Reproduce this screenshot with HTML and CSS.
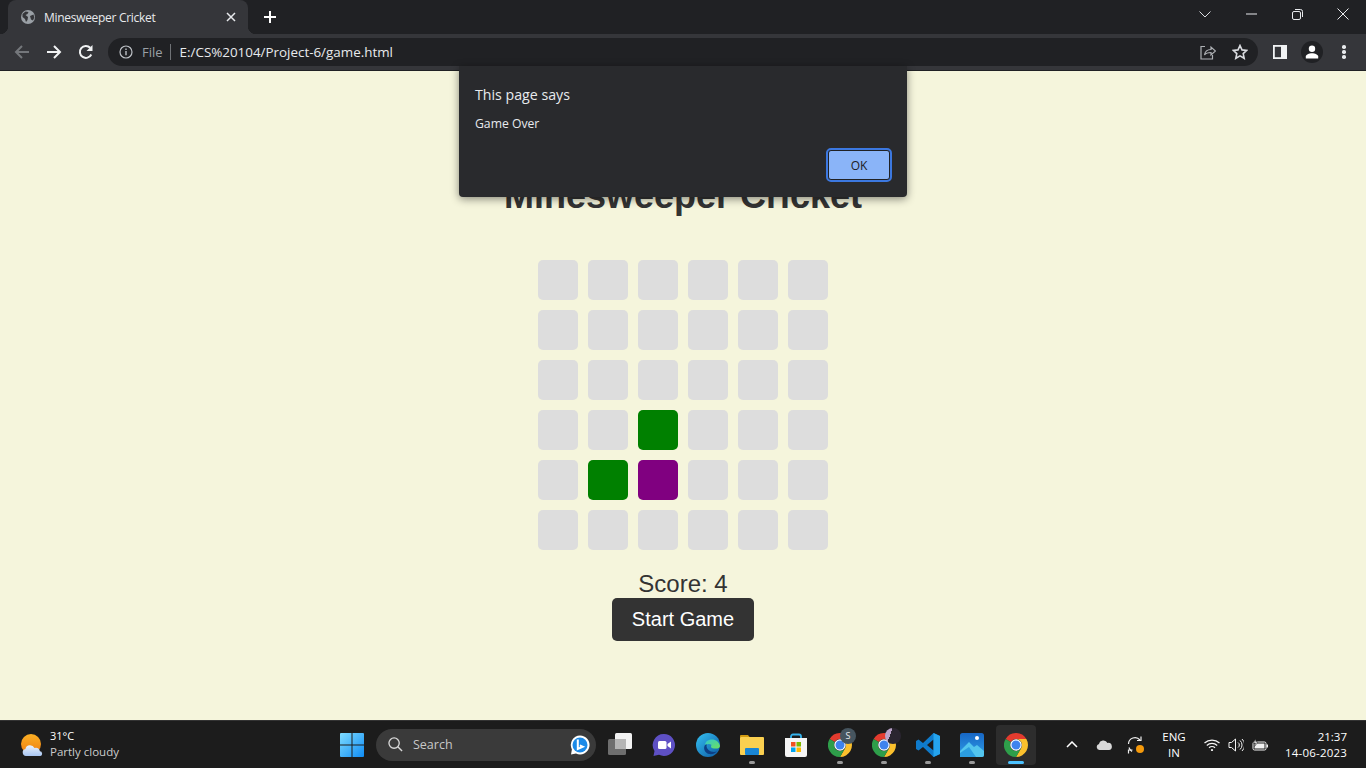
FILE: index.html
```html
<!DOCTYPE html>
<html lang="en">
<head>
    <meta charset="UTF-8">
    <title>Minesweeper Cricket</title>
    <link rel="stylesheet" href="styles.css">
</head>
<body>
<svg class="defs" width="0" height="0">
    <symbol id="chrome" viewBox="0 0 48 48">
        <path fill="#e33b2e" d="M3.2 12A24 24 0 0 1 44.78 12H24A12 12 0 0 0 13.6 18z"/>
        <path fill="#fbc02d" d="M44.78 12A24 24 0 0 1 24 48L34.4 30A12 12 0 0 0 24 12z"/>
        <path fill="#2e9e4a" d="M24 48A24 24 0 0 1 3.2 12L13.6 18A12 12 0 0 0 34.4 30z"/>
        <circle cx="24" cy="24" r="11.5" fill="#fff"/>
        <circle cx="24" cy="24" r="9" fill="#3f83ee"/>
    </symbol>
</svg>

<div class="tabstrip">
    <div class="tab">
        <svg class="favicon" viewBox="0 0 16 16"><circle cx="8" cy="8" r="7" fill="#9aa0a6"/><path fill="#35363a" d="M2.500 5l3-2.500 3 .5-1 2-2 1 2.500 2-.5 3-1.500 2-1-3-2.500-2zM10 7l3.500-1.500.8 3-1.300 3-2-1z"/></svg>
        <span class="tab-title">Minesweeper Cricket</span>
        <svg class="tab-close" viewBox="0 0 10 10"><path d="M1 1l8 8M9 1l-8 8" stroke="#e8eaed" stroke-width="1.500"/></svg>
    </div>
    <svg class="new-tab" viewBox="0 0 12 12"><path d="M6 0v12M0 6h12" stroke="#fff" stroke-width="2"/></svg>
    <div class="win-controls">
        <span class="win-btn"><svg width="12" height="7" viewBox="0 0 12 7"><path d="M.5.5L6 6 11.500.5" fill="none" stroke="#dadce0"/></svg></span>
        <span class="win-btn"><svg width="11" height="2" viewBox="0 0 11 2"><path d="M0 1h11" stroke="#e8eaed"/></svg></span>
        <span class="win-btn"><svg width="11" height="11" viewBox="0 0 11 11"><rect x=".5" y="2.500" width="8" height="8" rx="1.500" fill="none" stroke="#e8eaed"/><path d="M3 .5h5.500a2 2 0 0 1 2 2V8" fill="none" stroke="#e8eaed"/></svg></span>
        <span class="win-btn"><svg width="12" height="12" viewBox="0 0 12 12"><path d="M.5.5l11 11M11.500.5l-11 11" stroke="#e8eaed"/></svg></span>
    </div>
</div>

<div class="toolbar">
    <svg class="nav-icon first" viewBox="0 0 16 16"><path d="M15 8H2M8 2L2 8l6 6" fill="none" stroke="#74777b" stroke-width="2"/></svg>
    <svg class="nav-icon" viewBox="0 0 16 16"><path d="M1 8h13M8 2l6 6-6 6" fill="none" stroke="#f1f3f4" stroke-width="2"/></svg>
    <svg class="nav-icon" viewBox="0 0 16 16"><path d="M13.300 10.500A6 6 0 1 1 12.200 3.700" fill="none" stroke="#f1f3f4" stroke-width="2"/><path d="M14.500 1v6h-6z" fill="#f1f3f4"/></svg>
    <div class="omnibox">
        <svg class="info-icon" viewBox="0 0 14 14"><circle cx="7" cy="7" r="6" fill="none" stroke="#bdc1c6" stroke-width="1.200"/><path d="M7 6v4.200M7 3.500v1.400" stroke="#bdc1c6" stroke-width="1.400"/></svg>
        <span class="scheme">File</span>
        <span class="url">E:/CS%20104/Project-6/game.html</span>
        <svg class="omni-icon share" viewBox="0 0 16 16"><path d="M5 2.500H1v12.500h11.500v-4" fill="none" stroke="#aeb1b5" stroke-width="1.200"/><path d="M4.500 11c.5-3.500 3-5.500 6.500-5.500V3l4.500 4-4.500 4V8.500c-2.500 0-5 .5-6.500 2.500z" fill="none" stroke="#aeb1b5" stroke-width="1.200"/></svg>
        <svg class="omni-icon" viewBox="0 0 16 16"><path d="M8 1.500l2 4.400 4.700.5-3.500 3.200 1 4.700L8 11.900l-4.200 2.400 1-4.700L1.300 6.400 6 5.900z" fill="none" stroke="#dadce0" stroke-width="1.600"/></svg>
    </div>
    <svg class="side-panel" viewBox="0 0 14 14"><rect x=".9" y=".9" width="12.200" height="12.200" fill="none" stroke="#f1f3f4" stroke-width="1.800"/><rect x="8" y="1" width="5" height="12" fill="#f1f3f4"/></svg>
    <div class="avatar"><svg width="14" height="14" viewBox="0 0 14 14"><circle cx="7" cy="3.700" r="3.200" fill="#fff"/><path d="M.8 13.500v-2C.8 9.500 4 8.200 7 8.200s6.200 1.300 6.200 3.300v2z" fill="#fff"/></svg></div>
    <div class="kebab"><i></i><i></i><i></i></div>
</div>

<main class="page">
    <h1 class="title">Minesweeper Cricket</h1>
    <div class="board">
        <div class="cell"></div><div class="cell"></div><div class="cell"></div><div class="cell"></div><div class="cell"></div><div class="cell"></div>
        <div class="cell"></div><div class="cell"></div><div class="cell"></div><div class="cell"></div><div class="cell"></div><div class="cell"></div>
        <div class="cell"></div><div class="cell"></div><div class="cell"></div><div class="cell"></div><div class="cell"></div><div class="cell"></div>
        <div class="cell"></div><div class="cell"></div><div class="cell safe"></div><div class="cell"></div><div class="cell"></div><div class="cell"></div>
        <div class="cell"></div><div class="cell safe"></div><div class="cell mine"></div><div class="cell"></div><div class="cell"></div><div class="cell"></div>
        <div class="cell"></div><div class="cell"></div><div class="cell"></div><div class="cell"></div><div class="cell"></div><div class="cell"></div>
    </div>
    <div class="score">Score: 4</div>
    <button class="start-btn">Start Game</button>
</main>

<div class="alert">
    <div class="alert-title">This page says</div>
    <div class="alert-msg">Game Over</div>
    <div class="alert-actions"><button class="alert-ok">OK</button></div>
</div>

<footer class="taskbar">
    <div class="weather">
        <svg class="weather-icon" viewBox="0 0 24 24">
            <defs>
                <linearGradient id="sun" x1="0" y1="0" x2="0" y2="1"><stop offset="0" stop-color="#fbb024"/><stop offset="1" stop-color="#ee7d11"/></linearGradient>
                <linearGradient id="cloud" x1="0" y1="0" x2="0" y2="1"><stop offset="0" stop-color="#eaf2fd"/><stop offset="1" stop-color="#a9c6f2"/></linearGradient>
            </defs>
            <circle cx="11" cy="11" r="10" fill="url(#sun)"/>
            <path d="M6 23a3.500 3.500 0 0 1-.6-6.900 4.500 4.500 0 0 1 4.500-3.800 5 5 0 0 1 4.600 2.800 3.800 3.800 0 0 1 5.400 3.200 2.400 2.400 0 0 1 .5 4.700z" fill="url(#cloud)"/>
        </svg>
        <div class="weather-text">
            <div class="temp">31°C</div>
            <div class="cond">Partly cloudy</div>
        </div>
    </div>

    <div class="tb-item">
        <svg class="tb-icon" viewBox="0 0 24 24">
            <defs><linearGradient id="win" x1="0" y1="0" x2="1" y2="1"><stop offset="0" stop-color="#7fdcff"/><stop offset="1" stop-color="#0f8cf5"/></linearGradient></defs>
            <path fill="url(#win)" d="M0 1a1 1 0 0 1 1-1h10.500v11.500H0zM12.500 0H23a1 1 0 0 1 1 1v10.500H12.500zM0 12.500h11.500V24H1a1 1 0 0 1-1-1zM12.500 12.500H24V23a1 1 0 0 1-1 1H12.500z"/>
        </svg>
    </div>

    <div class="search">
        <svg class="search-icon" viewBox="0 0 16 16"><circle cx="6.500" cy="6.500" r="5.500" fill="none" stroke="#d8d8d8" stroke-width="1.400"/><path d="M10.500 10.500L15 15" stroke="#d8d8d8" stroke-width="1.500"/></svg>
        <span class="search-label">Search</span>
        <svg class="bing" viewBox="0 0 20 20"><path d="M10 .5a9.500 9.500 0 1 1-4 18.100L1 19.500l.9-5A9.500 9.500 0 0 1 10 .5z" fill="#fff"/><circle cx="10" cy="10" r="7.500" fill="#1b8ae8"/><path d="M7.800 4.500v9.500l5-2.300-3-1.300" fill="none" stroke="#fff" stroke-width="2"/></svg>
    </div>

    <div class="tb-item">
        <svg class="tb-icon" viewBox="0 0 24 24"><rect x="0" y="6" width="18" height="16" rx="1.500" fill="#6e6e6e"/><rect x="7" y="0" width="17" height="16" rx="1.500" fill="#f2f2f2"/><rect x="7" y="6" width="11" height="10" fill="#b5b5b5"/></svg>
    </div>
    <div class="tb-item">
        <svg class="tb-icon" viewBox="0 0 24 24"><path d="M12 1a11 11 0 1 1-5 20.800L1.500 23l1-5A11 11 0 0 1 12 1z" fill="#5e50c4"/><rect x="6" y="8" width="8.500" height="8" rx="1.500" fill="#fff"/><path d="M15.500 11l3.500-2.500v7L15.500 13z" fill="#fff"/></svg>
    </div>
    <div class="tb-item">
        <svg class="tb-icon" viewBox="0 0 24 24">
            <defs>
                <linearGradient id="edge-a" x1="0" y1="0" x2="1" y2="1"><stop offset="0" stop-color="#35c1f1"/><stop offset="1" stop-color="#0c59a4"/></linearGradient>
                <linearGradient id="edge-b" x1="0" y1="0" x2="1" y2="1"><stop offset="0" stop-color="#30c8d0"/><stop offset="1" stop-color="#6fe05a"/></linearGradient>
            </defs>
            <circle cx="12" cy="12" r="12" fill="url(#edge-a)"/>
            <path d="M9 12.500C9 8 13 6.500 16 6.500c4 0 7 2.500 8 6.500-.5 3-3 2.500-6 2.500-2 0-3-.8-3-2 0-1 .5-1.500.5-1.500s-2-2.500-6.500.5z" fill="url(#edge-b)"/>
            <path d="M9 12c-2 3-.5 8 4 9 3 .6 6-.5 8-2.500-3 1-6.500.5-8.500-1.500S10 13 11 11.500c-1 0-1.500 0-2 .5z" fill="#0d3f85"/>
        </svg>
    </div>
    <div class="tb-item open">
        <svg class="tb-icon" viewBox="0 0 24 24"><path d="M0 3a1 1 0 0 1 1-1h7l2 2.500H0z" fill="#d39c12"/><rect x="0" y="4" width="24" height="18" rx="1" fill="#fbd050"/><rect x="5" y="15" width="14" height="7" rx="1" fill="#1a86d4"/></svg>
    </div>
    <div class="tb-item">
        <svg class="tb-icon" viewBox="0 0 24 24"><path d="M7 6V3.500A2 2 0 0 1 9 1.500h6a2 2 0 0 1 2 2V6" fill="none" stroke="#35b4ee" stroke-width="1.800"/><path d="M1 5h22v17a2 2 0 0 1-2 2H3a2 2 0 0 1-2-2z" fill="#f5f5f5"/><rect x="7" y="9" width="4.500" height="4.500" fill="#f25022"/><rect x="12.500" y="9" width="4.500" height="4.500" fill="#7fba00"/><rect x="7" y="14.500" width="4.500" height="4.500" fill="#00a4ef"/><rect x="12.500" y="14.500" width="4.500" height="4.500" fill="#ffb900"/></svg>
    </div>
    <div class="tb-item open">
        <svg class="tb-icon"><use href="#chrome"/></svg>
        <span class="app-badge">S</span>
    </div>
    <div class="tb-item open">
        <svg class="tb-icon"><use href="#chrome"/></svg>
        <span class="app-badge photo"></span>
    </div>
    <div class="tb-item open">
        <svg class="tb-icon" viewBox="0 0 24 24"><path d="M17.500 0L24 3v18l-6.500 3L7 14l-4.500 3.500L0 16v-8l2.500-1.500L7 10zM17.500 6.500L11 12l6.500 5.500z" fill="#0f7bcb" fill-rule="evenodd"/><path d="M17.500 0L24 3v18l-6.500 3z" fill="#25a4ee"/></svg>
    </div>
    <div class="tb-item open">
        <svg class="tb-icon" viewBox="0 0 24 24">
            <defs><linearGradient id="photos" x1="0" y1="0" x2="0" y2="1"><stop offset="0" stop-color="#1766c4"/><stop offset="1" stop-color="#2f9ee8"/></linearGradient></defs>
            <rect width="24" height="24" rx="2.500" fill="url(#photos)"/>
            <circle cx="17" cy="5" r="2" fill="#fff"/>
            <path d="M0 18l9-9 5 5 3-2 7 6v4a2 2 0 0 1-2 2H2a2 2 0 0 1-2-2z" fill="#53c5ee"/>
            <path d="M0 24V20l9-6 7 10z" fill="#2b9de0"/>
        </svg>
    </div>
    <div class="tb-item active">
        <svg class="tb-icon"><use href="#chrome"/></svg>
    </div>

    <div class="tray">
        <svg class="tray-chev" viewBox="0 0 12 7"><path d="M1 6l5-5 5 5" fill="none" stroke="#fff" stroke-width="1.500"/></svg>
        <svg class="tray-cloud" viewBox="0 0 16 10"><path d="M3.500 10a3 3 0 0 1-.5-5.900A4.500 4.500 0 0 1 11.500 3 3.500 3.500 0 0 1 13 10z" fill="#d8d8d8"/></svg>
        <svg class="tray-sync" viewBox="0 0 18 18"><path d="M1.500 8A6.500 6.500 0 0 1 13 4" fill="none" stroke="#eee" stroke-width="1.200"/><path d="M14 .5V4.500h-4" fill="none" stroke="#eee" stroke-width="1.200"/><path d="M2 11.500a6.500 6.500 0 0 0 3 4" fill="none" stroke="#eee" stroke-width="1.200"/><path d="M1.500 17.500V14h4" fill="none" stroke="#eee" stroke-width="1.200"/><circle cx="13" cy="13" r="4" fill="#f59a0c"/></svg>
        <div class="lang"><div>ENG</div><div>IN</div></div>
        <svg class="tray-wifi" viewBox="0 0 16 12"><path d="M.5 4a11 11 0 0 1 15 0M2.800 6.500a7.500 7.500 0 0 1 10.400 0M5 8.800a4.300 4.300 0 0 1 6 0" fill="none" stroke="#f2f2f2" stroke-width="1.200"/><circle cx="8" cy="11" r="1.100" fill="#f2f2f2"/></svg>
        <svg class="tray-sound" viewBox="0 0 16 14"><path d="M1 4.500h2.500L7.500 1v12L3.500 9.500H1z" fill="none" stroke="#f2f2f2"/><path d="M10 4.500a3 3 0 0 1 0 5M12 2.500a6 6 0 0 1 0 9M14 1a8 8 0 0 1 0 12" fill="none" stroke="#f2f2f2"/></svg>
        <svg class="tray-batt" viewBox="0 0 16 12"><rect x="1" y="3" width="13" height="8" rx="1.500" fill="none" stroke="#f2f2f2"/><rect x="2.500" y="4.500" width="10" height="5" fill="#f2f2f2"/><rect x="14.500" y="5.500" width="1.500" height="3" fill="#f2f2f2"/><path d="M3.500 0L1.500 4h2l-1 3.500L6 3H4z" fill="#f2f2f2" stroke="#1c1c1c" stroke-width=".5"/></svg>
        <div class="clock"><div>21:37</div><div class="clock-date">14-06-2023</div></div>
    </div>
</footer>
</body>
</html>
```

FILE: styles.css
```css
html, body {
    margin: 0;
    height: 768px;
    overflow: hidden;
}
body {
    display: flex;
    flex-direction: column;
    position: relative;
    background: #f5f5dc;
    font-family: "Open Sans", "Noto Sans", sans-serif;
}
.defs {
    position: absolute;
}

/* browser top */
.tabstrip {
    height: 34px;
    flex: none;
    display: flex;
    align-items: flex-end;
    background: #202124;
}
.tab {
    width: 240px;
    height: 34px;
    margin-left: 8px;
    padding: 0 10px 0 12px;
    box-sizing: border-box;
    display: flex;
    align-items: center;
    position: relative;
    background: #35363a;
    border-radius: 8px 8px 0 0;
}
/* the little curves at the foot of the active tab */
.tab::before,
.tab::after {
    content: "";
    position: absolute;
    bottom: 0;
    width: 8px;
    height: 8px;
}
.tab::before {
    left: -8px;
    background: radial-gradient(circle at 0 0, transparent 8px, #35363a 8.500px);
}
.tab::after {
    right: -8px;
    background: radial-gradient(circle at 100% 0, transparent 8px, #35363a 8.500px);
}
.favicon {
    width: 16px;
    height: 16px;
    margin-right: 8px;
}
.tab-title {
    flex: 1;
    color: #e8eaed;
    font-size: 12px;
    letter-spacing: -.3px;
    white-space: nowrap;
}
.tab-close {
    width: 10px;
    height: 10px;
    margin-right: 2px;
}
.new-tab {
    width: 12px;
    height: 12px;
    margin: 0 0 11px 16px;
}
.win-controls {
    margin-left: auto;
    height: 34px;
    display: flex;
    align-self: flex-start;
}
.win-btn {
    width: 46px;
    height: 28px;
    display: flex;
    align-items: center;
    justify-content: center;
}

.toolbar {
    height: 37px;
    flex: none;
    display: flex;
    align-items: center;
    box-sizing: border-box;
    background: #35363a;
    border-bottom: 1px solid #202124;
}
.nav-icon {
    width: 16px;
    height: 16px;
    margin-right: 16px;
}
.nav-icon.first {
    margin-left: 14px;
}
.omnibox {
    width: 1150px;
    height: 28px;
    margin-left: -2px;
    box-sizing: border-box;
    padding: 0 10px 0 11px;
    display: flex;
    align-items: center;
    background: #202124;
    border-radius: 14px;
}
.info-icon {
    width: 14px;
    height: 14px;
    margin-right: 9px;
}
.scheme {
    color: #9aa0a6;
    font-size: 13px;
    padding-right: 7px;
    border-right: 1px solid #6f7276;
    line-height: 16px;
    margin-right: 9px;
}
.url {
    flex: 1;
    color: #e8eaed;
    font-size: 13.400px;
}
.omni-icon {
    width: 16px;
    height: 16px;
}
.omni-icon.share {
    margin-right: 16px;
}
.side-panel {
    width: 14px;
    height: 14px;
    margin-left: 15px;
}
.avatar {
    width: 22px;
    height: 22px;
    margin-left: 14px;
    border-radius: 50%;
    background: #202124;
    display: flex;
    align-items: center;
    justify-content: center;
}
.kebab {
    margin-left: 19px;
    display: flex;
    flex-direction: column;
    gap: 1.500px;
}
.kebab i {
    width: 3.500px;
    height: 3.500px;
    border-radius: 50%;
    background: #e8eaed;
}

/* game */
.page {
    flex: 1;
    display: flex;
    flex-direction: column;
    align-items: center;
    color: #333;
    font-family: "Liberation Sans", Arial, sans-serif;
}
.title {
    margin: 104px 0 44px;
    font-size: 36px;
    line-height: 41px;
}
.board {
    display: grid;
    grid-template-columns: repeat(6, 40px);
    grid-auto-rows: 40px;
    gap: 10px;
}
.cell {
    background: #ddd;
    border-radius: 5px;
}
.cell.safe {
    background: green;
}
.cell.mine {
    background: purple;
}
.score {
    margin-top: 20px;
    font-size: 24px;
    line-height: 28px;
}
.start-btn {
    padding: 10px 20px;
    border: none;
    border-radius: 5px;
    background: #333;
    color: #fff;
    font: 20px/23px "Liberation Sans", Arial, sans-serif;
}

/* js alert */
.alert {
    position: absolute;
    left: 459px;
    top: 66px;
    width: 448px;
    height: 131px;
    box-sizing: border-box;
    padding: 19px 16px 0;
    background: #292a2d;
    border-radius: 0 0 4px 4px;
    box-shadow: 0 2px 8px rgba(0, 0, 0, .45);
    color: #e8eaed;
}
.alert-title {
    font-size: 14.200px;
    line-height: 19px;
}
.alert-msg {
    margin-top: 11px;
    font-size: 12.200px;
    line-height: 17px;
}
.alert-actions {
    margin-top: 18px;
    display: flex;
    justify-content: flex-end;
}
.alert-ok {
    width: 62px;
    height: 30px;
    box-sizing: border-box;
    background: #8ab4f8;
    border: 1px solid #202124;
    outline: 2px solid #3c78e0;
    border-radius: 3px;
    margin-right: 1px;
    padding: 0;
    color: #202124;
    font: 12px "Open Sans", sans-serif;
}

/* windows taskbar */
.taskbar {
    height: 48px;
    flex: none;
    box-sizing: border-box;
    display: flex;
    align-items: center;
    background: #1c1c1c;
    border-top: 1px solid #333;
    color: #fff;
}
.weather {
    width: 330px;
    box-sizing: border-box;
    padding-left: 20px;
    display: flex;
    align-items: center;
}
.weather-icon {
    width: 24px;
    height: 24px;
    margin-right: 6px;
}
.weather-text {
    margin-bottom: 2px;
}
.temp {
    font-size: 11px;
    line-height: 15px;
}
.cond {
    font-size: 11.500px;
    line-height: 17px;
    color: #ccc;
}
.tb-item {
    width: 44px;
    height: 46px;
    flex: none;
    position: relative;
    display: flex;
    align-items: center;
    justify-content: center;
}
.tb-icon {
    width: 24px;
    height: 24px;
}
.tb-item.open::after,
.tb-item.active::after {
    content: "";
    position: absolute;
    left: 19px;
    bottom: 4px;
    width: 6px;
    height: 3px;
    border-radius: 2px;
    background: #9a9a9a;
}
.tb-item.active::before {
    content: "";
    position: absolute;
    left: 2px;
    top: 3px;
    width: 40px;
    height: 40px;
    border-radius: 4px;
    background: #2d2d2d;
}
.tb-item.active::after {
    left: 14px;
    width: 16px;
    background: #4cc2ff;
}
.tb-item.active .tb-icon {
    position: relative;
}
.app-badge {
    position: absolute;
    left: 22px;
    top: 6px;
    width: 16px;
    height: 16px;
    border-radius: 50%;
    background: #46555f;
    color: #e8eaed;
    font-size: 9px;
    line-height: 16px;
    text-align: center;
}
.app-badge.photo {
    left: 23px;
    background: linear-gradient(110deg, #b9a2c8 0 35%, #2a2530 35% 100%);
}
.search {
    width: 220px;
    height: 32px;
    flex: none;
    margin: 0 2px;
    box-sizing: border-box;
    padding: 0 2px 0 12px;
    display: flex;
    align-items: center;
    border-radius: 16px;
    background: #3a3a3a;
}
.search-icon {
    width: 15px;
    height: 15px;
    margin-right: 10px;
}
.search-label {
    flex: 1;
    color: #c8c8c8;
    font-size: 12.500px;
}
.bing {
    width: 20px;
    height: 20px;
    margin-right: 4px;
}
.tray {
    flex: 1;
    display: flex;
    align-items: center;
    padding-right: 19px;
    font-size: 11.500px;
}
.tray-chev {
    width: 12px;
    height: 7px;
    margin-left: 28px;
}
.tray-cloud {
    width: 16px;
    height: 10px;
    margin-left: 18px;
}
.tray-sync {
    width: 18px;
    height: 18px;
    margin-left: 15px;
}
.lang {
    width: 30px;
    margin-left: 14px;
    text-align: center;
    line-height: 16px;
}
.tray-wifi {
    width: 16px;
    height: 12px;
    margin-left: 15px;
}
.tray-sound {
    width: 16px;
    height: 14px;
    margin-left: 8px;
}
.tray-batt {
    width: 16px;
    height: 12px;
    margin-left: 8px;
}
.clock {
    margin-left: auto;
    text-align: right;
    line-height: 16px;
}
.clock-date {
    letter-spacing: .2px;
}
```
